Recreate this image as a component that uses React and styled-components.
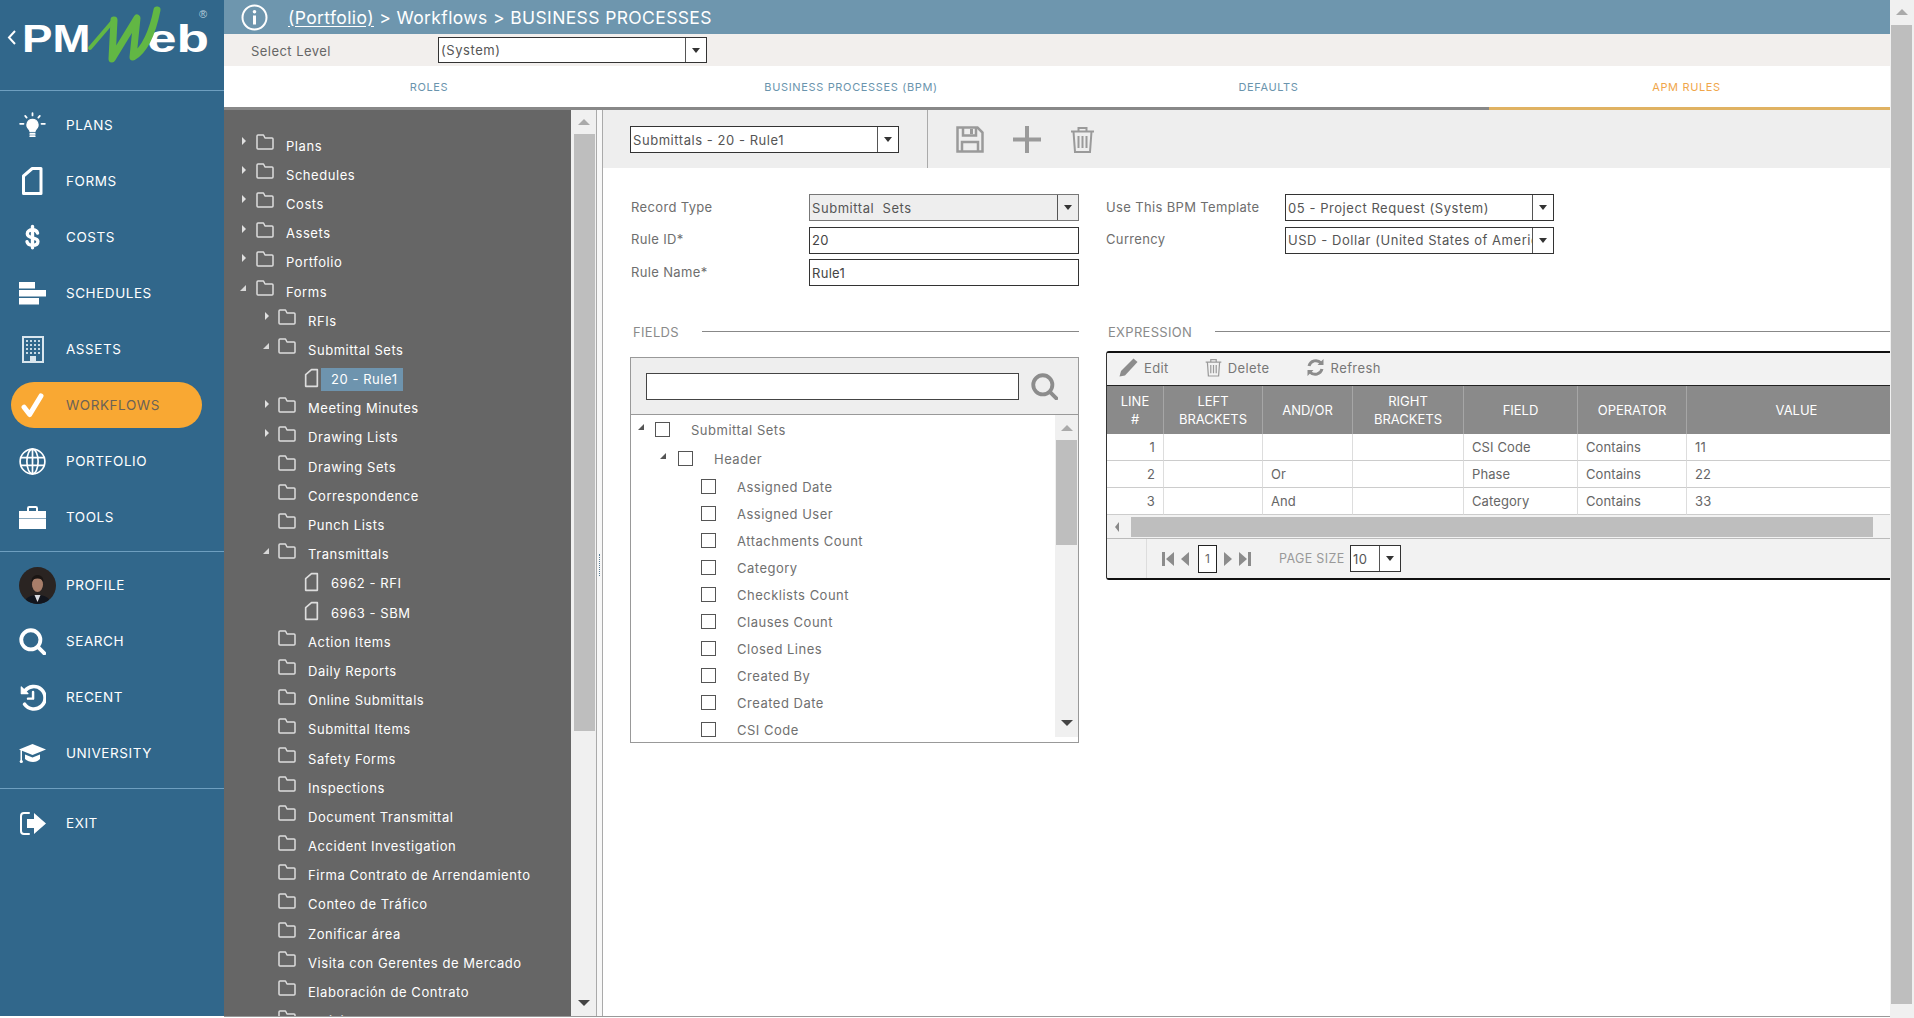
import React from 'react'
import styled, { createGlobalStyle } from 'styled-components'

const FONT = `Inter, "Open Sans", "Liberation Sans", sans-serif`

const Global = createGlobalStyle`
  html, body { margin: 0; padding: 0; height: 100%; overflow: hidden; background: #fff; }
  #root { height: 100%; }
  * { box-sizing: border-box; }
  body { font-family: ${FONT}; }
`

const Page = styled.div`
  width: 1914px;
  height: 1018px;
  display: flex;
  overflow: hidden;
`

// ---- sidebar ----
const Sidebar = styled.aside`
  width: 224px;
  flex: none;
  height: 1016px;
  background: #31678b;
  display: flex;
  flex-direction: column;
`

const LogoBox = styled.div`
  height: 91px;
  flex: none;
  border-bottom: 1px solid #6e9fc0;
  position: relative;
  display: flex;
  align-items: flex-start;
  padding: 17px 0 0 22px;
  color: #fff;
  font: 700 38px/44px "Liberation Sans", Arial, sans-serif;
`

const LogoPm = styled.span`
  width: 57px;
  flex: none;
  transform: scaleX(1.2);
  transform-origin: left;
`

const LogoEb = styled.span`
  margin-left: 68px;
  transform: scaleX(1.4);
  transform-origin: left;
`

const LogoMark = styled.svg`
  position: absolute;
  left: 0;
  top: 0;
`

const Trademark = styled.span`
  position: absolute;
  left: 199px;
  top: 9px;
  font: 400 11px/11px "Liberation Sans", Arial, sans-serif;
  color: #b9cfdd;
`

const Menu = styled.nav`
  display: flex;
  flex-direction: column;
  padding: ${p => p.$pad || '0'};
  border-bottom: ${p => (p.$line ? '1px solid #6e9fc0' : '0')};
`

const MenuItem = styled.a`
  height: ${p => (p.$active ? 46 : 56)}px;
  margin: ${p => (p.$active ? '5px' : '0')} 22px ${p => (p.$active ? '5px' : '0')} 11px;
  padding-left: 8px;
  display: flex;
  align-items: center;
  gap: 20px;
  color: ${p => (p.$active ? '#6b6256' : '#fff')};
  background: ${p => (p.$active ? '#f9a833' : 'transparent')};
  border-radius: 23px;
  font-size: 13.5px;
  letter-spacing: 0.55px;
`

const MenuIcon = styled.span`
  width: 27px;
  height: 30px;
  flex: none;
  display: flex;
  align-items: center;
  justify-content: center;
`

const AvatarSvg = styled.svg`
  flex: none;
  margin-left: 5px;
  margin-right: -5px;
`

// ---- main column ----
const Main = styled.div`
  flex: 1;
  min-width: 0;
  display: flex;
  flex-direction: column;
  height: 1017px;
  border-bottom: 1px solid #999;
`

const TopBar = styled.header`
  height: 34px;
  flex: none;
  background: #6e96ae;
  display: flex;
  align-items: center;
  gap: 20px;
  padding-left: 17px;
  color: #fff;
  font-size: 17.5px;
  letter-spacing: 0.38px;
`

const Crumb = styled.span`
  text-decoration: underline;
  text-underline-offset: 2px;
`

const LevelBar = styled.div`
  height: 32px;
  flex: none;
  background: #f2efed;
  display: flex;
  align-items: center;
  padding-left: 27px;
  font-size: 13px;
  color: #666;
`

const LevelLabel = styled.span`
  width: 187px;
  padding-top: 1px;
  letter-spacing: 0.45px;
`

const TabBar = styled.div`
  height: 44px;
  flex: none;
  display: flex;
  background: #fff;
  border-bottom: 3px solid #888;
`

const Tab = styled.div`
  width: ${p => p.$w}px;
  padding-right: ${p => p.$pr || 0}px;
  margin-bottom: -3px;
  border-bottom: 3px solid ${p => (p.$active ? '#e0b262' : '#888')};
  display: flex;
  align-items: center;
  justify-content: center;
  font-size: 11px;
  letter-spacing: 0.65px;
  color: ${p => (p.$active ? '#f0a64a' : '#6a94ad')};
`

const Body = styled.div`
  flex: 1;
  min-height: 0;
  display: flex;
`

// ---- tree panel ----
const TreePanel = styled.div`
  width: 347px;
  flex: none;
  background: #666;
  padding: 21px 0 0;
  overflow: hidden;
`

const TreeRow = styled.div`
  height: 29.2px;
  display: flex;
  align-items: center;
  position: relative;
  padding-left: ${p => 62 + p.$level * 22 + (p.$level === 2 ? 1 : 0)}px;
  color: #fff;
  font-size: 13px;
  letter-spacing: 0.55px;
  white-space: nowrap;
`

const TreeArrow = styled.span`
  position: absolute;
  left: ${p => 18 + p.$level * 23}px;
  top: 4px;
  width: 0;
  height: 0;
  ${p =>
    p.$open
      ? `border-left: 6px solid transparent; border-bottom: 6px solid #d8d8d8; margin-top: 4px; margin-left: -2px;`
      : `border-left: 4px solid #e0e0e0; border-top: 4px solid transparent; border-bottom: 4px solid transparent; margin-top: 2px;`}
`

const TreeGlyph = styled.span`
  position: absolute;
  left: ${p => p.$left}px;
  top: 3px;
`

const TreeText = styled.span`
  padding: ${p => (p.$selected ? '3px 5px 4px 10px' : '0')};
  margin-left: ${p => (p.$selected ? '-10px' : '0')};
  background: ${p => (p.$selected ? '#6e94ae' : 'transparent')};
`

const ScrollBar = styled.div`
  width: ${p => p.$w || 25}px;
  flex: none;
  background: #f0f0f0;
  display: flex;
  flex-direction: column;
  align-items: center;
  position: relative;
`

const ScrollThumb = styled.div`
  background: #bebebe;
  width: ${p => p.$w}px;
  position: absolute;
  top: ${p => p.$top}px;
  height: ${p => p.$h}px;
  right: ${p => p.$right || 1}px;
`

const Tri = styled.span`
  position: absolute;
  top: ${p => p.$top}px;
  left: 50%;
  margin-left: -6px;
  width: 0;
  height: 0;
  border-left: 6px solid transparent;
  border-right: 6px solid transparent;
  ${p => (p.$down ? 'border-top: 6px solid #444;' : 'border-bottom: 6px solid #aaa;')}
`

const Splitter = styled.div`
  width: 7px;
  flex: none;
  background: #f7f7f7;
  border-left: 1px solid #aaa;
  border-right: 1px solid #aaa;
  display: flex;
  align-items: center;
  justify-content: center;
`

const SplitDots = styled.span`
  width: 1px;
  height: 22px;
  margin-top: 3px;
  border-left: 1px dotted #5a7e96;
`

// ---- content ----
const Content = styled.section`
  flex: 1;
  min-width: 0;
  display: flex;
  flex-direction: column;
`

const ContentArea = styled.div`
  width: 1287px;
  display: flex;
  flex-direction: column;
`

const Toolbar = styled.div`
  height: 58px;
  flex: none;
  background: #eee;
  display: flex;
`

const ToolSelectCell = styled.div`
  width: 325px;
  padding: 16px 0 0 27px;
  border-right: 1px solid #aaa;
`

const ToolIcons = styled.div`
  display: flex;
  gap: 29px;
  padding: 16px 0 0 28px;
`

const SelectBox = styled.div`
  width: ${p => p.$w || 269}px;
  height: ${p => p.$h || 27}px;
  flex: none;
  display: flex;
  border: 1px solid ${p => (p.$grey ? '#777' : '#333')};
  background: ${p => (p.$grey ? '#eee' : '#fff')};
  font-size: 13px;
  letter-spacing: 0.55px;
  color: #555;
  padding-left: 2px;
  align-items: center;
  overflow: hidden;
`

const SelectText = styled.span`
  flex: 1;
  min-width: 0;
  white-space: nowrap;
  overflow: hidden;
`

const SelectButton = styled.span`
  width: ${p => p.$w || 21}px;
  height: 100%;
  flex: none;
  border-left: 1px solid #555;
  background: ${p => (p.$grey ? '#eee' : '#fff')};
  display: flex;
  align-items: center;
  justify-content: center;
  &::after {
    content: '';
    border-left: 4px solid transparent;
    border-right: 4px solid transparent;
    border-top: 5px solid #333;
  }
`

const TextBox = styled.div`
  width: 270px;
  height: 27px;
  border: 1px solid #333;
  background: #fff;
  font-size: 13px;
  letter-spacing: 0.3px;
  color: #444;
  display: flex;
  align-items: center;
  padding-left: 2px;
`

const FormArea = styled.div`
  display: flex;
  padding: 26px 0 0 28px;
  height: 153px;
  flex: none;
`

const FormColumn = styled.div`
  width: ${p => p.$w}px;
  flex: none;
  display: flex;
  flex-direction: column;
  gap: 5.5px;
`

const FormRow = styled.div`
  display: flex;
  align-items: center;
  height: 27px;
`

const FormLabel = styled.label`
  width: ${p => p.$w}px;
  flex: none;
  margin-top: -2px;
  font-size: 13px;
  letter-spacing: 0.35px;
  color: #6e6e6e;
`

const Panels = styled.div`
  display: flex;
  padding-left: 27px;
`

const FieldsColumn = styled.div`
  width: 449px;
  flex: none;
  margin-right: 27px;
`

const ExpressionColumn = styled.div`
  flex: 1;
  min-width: 0;
`

const SectionTitle = styled.div`
  display: flex;
  align-items: center;
  gap: 23px;
  height: 22px;
  margin-bottom: 14px;
  padding-left: ${p => p.$pl || 3}px;
  font-size: 13px;
  letter-spacing: 0.3px;
  color: #8a8a8a;
  &::after {
    content: '';
    flex: 1;
    height: 1px;
    background: #888;
    margin-top: -2px;
  }
`

const FieldsBox = styled.div`
  width: 449px;
  height: 386px;
  border: 1px solid #999;
  display: flex;
  flex-direction: column;
`

const FieldsSearch = styled.div`
  height: 57px;
  flex: none;
  background: #eee;
  border-bottom: 1px solid #999;
  display: flex;
  align-items: center;
  gap: 12px;
  padding-left: 15px;
`

const SearchInput = styled.div`
  width: 373px;
  height: 27px;
  border: 1px solid #444;
  background: #fff;
`

const FieldsBody = styled.div`
  flex: 1;
  min-height: 0;
  display: flex;
  padding-bottom: 5px;
`

const FieldsList = styled.div`
  flex: 1;
  min-width: 0;
  overflow: hidden;
`

const FieldRow = styled.div`
  height: ${p => (p.$top ? 29 : 27)}px;
  display: flex;
  align-items: center;
  position: relative;
  padding-left: ${p => p.$pad}px;
  font-size: 13px;
  letter-spacing: 0.5px;
  color: #707070;
  white-space: nowrap;
`

const FieldTri = styled.span`
  position: absolute;
  left: ${p => p.$left}px;
  top: 9px;
  border-left: 6px solid transparent;
  border-bottom: 6px solid #555;
  width: 0;
  height: 0;
`

const Check = styled.span`
  width: 15px;
  height: 15px;
  flex: none;
  border: 1px solid #555;
  background: #fff;
  margin-right: 21px;
`

const GridBox = styled.div`
  width: 784px;
  height: 229px;
  overflow: hidden;
  border-top: 2px solid #111;
  border-left: 1px solid #333;
  border-bottom: 2px solid #111;
  border-radius: 3px 0 0 3px;
  margin-top: -6px;
  display: flex;
  flex-direction: column;
`

const GridTools = styled.div`
  height: 33px;
  flex: none;
  background: #f2f2f2;
  border-bottom: 1px solid #222;
  display: flex;
  align-items: center;
  padding: 0 0 3px 12px;
  gap: 36px;
`

const GridTool = styled.span`
  display: flex;
  align-items: center;
  gap: 6px;
  font-size: 13px;
  letter-spacing: 0.4px;
  color: #777;
`

const GridTable = styled.div`
  display: grid;
  grid-template-columns: 57px 99px 90px 111px 114px 109px 220px;
`

const HeadCell = styled.div`
  height: 48px;
  background: #8a8a8a;
  border-right: 1px solid #a6a6a6;
  color: #fff;
  font-size: 13px;
  line-height: 18px;
  display: flex;
  align-items: center;
  justify-content: center;
  text-align: center;
  white-space: pre-line;
`

const Cell = styled.div`
  height: 27px;
  border-right: 1px solid #ddd;
  border-bottom: 1px solid #ccc;
  font-size: 13px;
  letter-spacing: 0.1px;
  color: #666;
  display: flex;
  align-items: center;
  padding: 0 8px;
  justify-content: ${p => (p.$right ? 'flex-end' : 'flex-start')};
`

const GridScroll = styled.div`
  height: 24px;
  flex: none;
  background: #f2f2f2;
  border-bottom: 1px solid #bbb;
  position: relative;
  display: flex;
  align-items: center;
  padding-left: 8px;
  &::before {
    content: '';
    border-top: 5px solid transparent;
    border-bottom: 5px solid transparent;
    border-right: 4px solid #888;
  }
`

const GridThumb = styled.div`
  position: absolute;
  left: 24px;
  top: 2px;
  width: 742px;
  height: 20px;
  background: #bebebe;
`

const Pager = styled.div`
  flex: 1;
  min-height: 0;
  background: #f2f2f2;
  display: flex;
  align-items: center;
`

const PagerSpacer = styled.div`
  width: 40px;
  height: 100%;
  flex: none;
  border-right: 1px solid #ddd;
  margin-right: 15px;
`

const PageNumber = styled.span`
  width: 19px;
  height: 28px;
  border: 1px solid #222;
  background: #fff;
  font-size: 12px;
  color: #666;
  display: flex;
  align-items: center;
  justify-content: center;
  margin: 0 6px 0 8px;
`

const PageSizeLabel = styled.span`
  margin: 0 3px 0 28px;
  width: 68px;
  flex: none;
  font-size: 12.5px;
  letter-spacing: 0.35px;
  white-space: nowrap;
  color: #999;
`

const ArrowSvg = styled.svg`
  flex: none;
  transform: ${p => (p.$flip ? 'scaleX(-1)' : 'none')};
`

// ---- page scrollbar ----
const PageScroll = styled.div`
  width: 24px;
  flex: none;
  height: 1018px;
  background: #f0f0f0;
  position: relative;
`

const PageThumb = styled.div`
  position: absolute;
  left: 1px;
  right: 2px;
  top: 25px;
  bottom: 14px;
  background: #bebebe;
`

// ---- icons ----
const Glyph = ({ children, size = 27, vb = 24, color = '#fff', sw = 2, fill = 'none' }) => (
  <svg width={size} height={size} viewBox={`0 0 ${vb} ${vb}`} fill={fill} stroke={color} strokeWidth={sw} strokeLinecap="round" strokeLinejoin="round">
    {children}
  </svg>
)

const BulbIcon = () => (
  <Glyph>
    <path d="M12 6.5a5 5 0 0 0-3.2 8.8c.7.6 1 1.3 1 2.2h4.4c0-.9.3-1.6 1-2.2A5 5 0 0 0 12 6.5Z" fill="#fff" strokeWidth="1" />
    <path d="M10 19.5h4M10 21.5h4M12 1v2M5.5 3.5l1.3 1.5M18.5 3.5 17.2 5M1 10.5h3M20 10.5h3" strokeWidth="1.6" />
  </Glyph>
)

const DocIcon = ({ size = 30, color = '#fff', sw = 2.4 }) => (
  <svg width={size * 0.75} height={size} viewBox="0 0 18 24" fill="none" stroke={color} strokeWidth={sw} strokeLinejoin="round">
    <path d="M2 8 9 2h7v20H2Z" />
  </svg>
)

const DollarIcon = () => (
  <Glyph size={30} sw={3}>
    <path d="M16.5 8.5C16 6.6 14.2 5.6 12 5.6c-2.600 0-4.600 1.300-4.600 3.400 0 5 9.400 2.400 9.400 7 0 2.200-2.100 3.400-4.800 3.400-2.500 0-4.400-1.100-4.900-3.200M12 2.500v19" />
  </Glyph>
)

const ScheduleIcon = () => (
  <svg width="27" height="23" viewBox="0 0 27 23" fill="#fff">
    <rect x="0" y="0" width="16" height="6.500" />
    <rect x="0" y="8" width="27" height="6.500" />
    <rect x="0" y="16" width="20" height="6.500" />
  </svg>
)

const BuildingIcon = () => (
  <svg width="22" height="27" viewBox="0 0 22 27">
    <rect x="0" y="0" width="22" height="27" fill="#d9e6ee" />
    <rect x="2" y="2" width="18" height="23" fill="#31678b" />
    <g fill="#c7d9e4">
      {[4, 8, 12, 16].map(y => [4, 8, 12, 16].map(x => <rect key={`${x}-${y}`} x={x} y={y} width="2" height="2" />))}
    </g>
    <rect x="8" y="20" width="6" height="5" fill="#d9e6ee" />
  </svg>
)

const CheckIcon = () => (
  <Glyph size={33} sw={4.500}>
    <path d="M4.500 13.500 9.500 20 19.500 3.500" />
  </Glyph>
)

const GlobeIcon = () => (
  <Glyph sw={1.5}>
    <circle cx="12" cy="12" r="11" />
    <ellipse cx="12" cy="12" rx="5" ry="11" />
    <path d="M12 1v22M1.500 8.500h21M1.500 15.500h21" />
  </Glyph>
)

const CaseIcon = () => (
  <svg width="27" height="23" viewBox="0 0 27 23">
    <path d="M9 5V2.200C9 1.500 9.500 1 10.200 1h6.600c.7 0 1.200.5 1.200 1.200V5" fill="none" stroke="#fff" strokeWidth="2" />
    <rect x="0" y="5" width="27" height="18" fill="#fff" />
    <rect x="0" y="12" width="27" height="1" fill="#8aa9bf" />
  </svg>
)

const SearchIcon = ({ color = '#fff', size = 27, sw = 3.400 }) => (
  <Glyph size={size} color={color} sw={sw}>
    <circle cx="10.500" cy="10.500" r="8.500" />
    <path d="m17 17 5.500 5.500" />
  </Glyph>
)

const RecentIcon = () => (
  <Glyph sw={3.200}>
    <path d="M5 6.500A10 10 0 1 1 5 18" />
    <path d="M12.500 7v6H8" strokeWidth="2.200" />
    <path d="M2 2.500v6h6Z" fill="#fff" strokeWidth="1" />
  </Glyph>
)

const CapIcon = () => (
  <svg width="27" height="22" viewBox="0 0 27 22" fill="#fff">
    <path d="M13.500 2 27 7.500 13.500 13 0 7.500Z" />
    <path d="M6 12.500v4.500c2 2 5 3 8 3s5-1 7-3v-4.500l-7.500 3Z" />
    <rect x="1.500" y="8" width="1.500" height="11" />
    <circle cx="2.300" cy="19.500" r="1.600" />
  </svg>
)

const ExitIcon = () => (
  <svg width="27" height="25" viewBox="0 0 27 25">
    <path d="M10 2H5a3 3 0 0 0-3 3v15a3 3 0 0 0 3 3h5" fill="none" stroke="#fff" strokeWidth="2" strokeLinecap="round" />
    <path d="M8 8h7V2l12 10.500L15 23v-6H8Z" fill="#fff" />
  </svg>
)

const Avatar = () => (
  <AvatarSvg width="37" height="37" viewBox="0 0 37 37">
    <defs>
      <clipPath id="avatar-clip"><circle cx="18.500" cy="18.500" r="18.500" /></clipPath>
    </defs>
    <g clipPath="url(#avatar-clip)">
      <rect width="37" height="37" fill="#2a2422" />
      <path d="M5 37c1-7 7-9 13.500-9S31 30 32 37Z" fill="#12151d" />
      <path d="M15.500 28h6l-3 7Z" fill="#d9dbe0" />
      <ellipse cx="18.500" cy="17.500" rx="5.500" ry="7.500" fill="#a87e6a" />
      <path d="M12.500 15c0-5 2.500-7 6-7s6 2 6 7c-1.500-2.500-3-3.500-6-3.500s-4.500 1-6 3.500Z" fill="#1a1513" />
    </g>
  </AvatarSvg>
)

const InfoIcon = () => (
  <svg width="27" height="27" viewBox="0 0 27 27" fill="none">
    <circle cx="13.500" cy="13.500" r="12" stroke="#fff" strokeWidth="2" />
    <rect x="12" y="11.500" width="3" height="9" fill="#fff" />
    <circle cx="13.500" cy="7.800" r="1.800" fill="#fff" />
  </svg>
)

const FolderIcon = () => (
  <svg width="18" height="16" viewBox="0 0 18 16" fill="none" stroke="#ddd" strokeWidth="1.500" strokeLinejoin="round">
    <path d="M1 3V14a1 1 0 0 0 1 1h14a1 1 0 0 0 1-1V5a1 1 0 0 0-1-1H9L7.500 1H2a1 1 0 0 0-1 1Z" />
  </svg>
)

const SaveIcon = () => (
  <svg width="28" height="27" viewBox="0 0 28 27" fill="none" stroke="#9a9a9a" strokeWidth="2.500">
    <path d="M1.500 1.500h20l5 5v19h-25Z" />
    <path d="M7 1.500v8h13v-8M6 25.500V16h16v9.500" />
    <rect x="14" y="3" width="3" height="5" fill="#9a9a9a" stroke="none" />
  </svg>
)

const PlusIcon = () => (
  <svg width="28" height="27" viewBox="0 0 28 27" fill="#9a9a9a">
    <rect x="12" y="0" width="4" height="27" />
    <rect x="0" y="11.500" width="28" height="4" />
  </svg>
)

const TrashIcon = ({ w = 25, h = 27, sw = 2 }) => (
  <svg width={w} height={h} viewBox="0 0 25 27" fill="none" stroke="#9a9a9a" strokeWidth={sw}>
    <path d="M1 5.500h23M8.500 5V2h8v3M3.500 5.500 5 26h15l1.500-20.500M8.500 10v12M12.500 10v12M16.500 10v12" />
  </svg>
)

const PencilIcon = () => (
  <svg width="19" height="19" viewBox="0 0 19 19" fill="#8c8c8c">
    <path d="M14.500 0.500 18.500 4 6 17.500 0.500 18.500 2 13Z" />
  </svg>
)

const RefreshIcon = () => (
  <svg width="19" height="19" viewBox="0 0 19 19" fill="none" stroke="#8c8c8c" strokeWidth="3">
    <path d="M3 8a7 7 0 0 1 12-3M16 11a7 7 0 0 1-12 3" />
    <path d="M17.500 1v6h-6ZM1.500 18v-6h6Z" fill="#8c8c8c" stroke="none" />
  </svg>
)

const PagerArrows = ({ flip }) => (
  <ArrowSvg $flip={flip} width="28" height="20" viewBox="0 0 28 20" fill="#8c8c8c">
    <rect x="0" y="3" width="3" height="14" />
    <path d="M12 3v14L4 10ZM27 3v14l-8-7Z" />
  </ArrowSvg>
)

const menuTop = [
  ['PLANS', <BulbIcon />],
  ['FORMS', <DocIcon />],
  ['COSTS', <DollarIcon />],
  ['SCHEDULES', <ScheduleIcon />],
  ['ASSETS', <BuildingIcon />],
  ['WORKFLOWS', <CheckIcon />, true],
  ['PORTFOLIO', <GlobeIcon />],
  ['TOOLS', <CaseIcon />],
]

const menuMid = [
  ['PROFILE', <Avatar />],
  ['SEARCH', <SearchIcon />],
  ['RECENT', <RecentIcon />],
  ['UNIVERSITY', <CapIcon />],
]

// [label, level, arrow state, kind]
const tree = [
  ['Plans', 0, 'closed'],
  ['Schedules', 0, 'closed'],
  ['Costs', 0, 'closed'],
  ['Assets', 0, 'closed'],
  ['Portfolio', 0, 'closed'],
  ['Forms', 0, 'open'],
  ['RFIs', 1, 'closed'],
  ['Submittal Sets', 1, 'open'],
  ['20 - Rule1', 2, null, 'selected'],
  ['Meeting Minutes', 1, 'closed'],
  ['Drawing Lists', 1, 'closed'],
  ['Drawing Sets', 1],
  ['Correspondence', 1],
  ['Punch Lists', 1],
  ['Transmittals', 1, 'open'],
  ['6962 - RFI', 2, null, 'doc'],
  ['6963 - SBM', 2, null, 'doc'],
  ['Action Items', 1],
  ['Daily Reports', 1],
  ['Online Submittals', 1],
  ['Submittal Items', 1],
  ['Safety Forms', 1],
  ['Inspections', 1],
  ['Document Transmittal', 1],
  ['Accident Investigation', 1],
  ['Firma Contrato de Arrendamiento', 1],
  ['Conteo de Tráfico', 1],
  ['Zonificar área', 1],
  ['Visita con Gerentes de Mercado', 1],
  ['Elaboración de Contrato', 1],
  ['Solicitud de Presupuesto', 1],
]

const fields = ['Assigned Date', 'Assigned User', 'Attachments Count', 'Category', 'Checklists Count', 'Clauses Count', 'Closed Lines', 'Created By', 'Created Date', 'CSI Code']

const headers = ['LINE\n#', 'LEFT\nBRACKETS', 'AND/OR', 'RIGHT\nBRACKETS', 'FIELD', 'OPERATOR', 'VALUE']

const rows = [
  ['1', '', '', '', 'CSI Code', 'Contains', '11'],
  ['2', '', 'Or', '', 'Phase', 'Contains', '22'],
  ['3', '', 'And', '', 'Category', 'Contains', '33'],
]

function Logo() {
  return (
    <LogoBox>
      <LogoPm>PM</LogoPm>
      <LogoEb>eb</LogoEb>
      <LogoMark width="224" height="70" viewBox="0 0 224 70" fill="none">
        <path d="M15 31 9 37.500l6 6.500" stroke="#fff" strokeWidth="2" />
        <path d="M90 48 L114 20" stroke="#62b744" strokeWidth="4" strokeLinecap="round" />
        <path d="M114 20 L112 59 L137 18 L133 57 C 145 50 153 30 157 10" stroke="#62b744" strokeWidth="7" strokeLinecap="round" strokeLinejoin="round" />
      </LogoMark>
      <Trademark>®</Trademark>
    </LogoBox>
  )
}

function App() {
  return (
    <Page>
      <Global />
      <Sidebar>
        <Logo />
        <Menu $line $pad="6px 0 6px">
          {menuTop.map(([label, icon, active]) => (
            <MenuItem key={label} $active={active}>
              <MenuIcon>{icon}</MenuIcon>
              {label}
            </MenuItem>
          ))}
        </Menu>
        <Menu $line $pad="5px 0 7px">
          {menuMid.map(([label, icon]) => (
            <MenuItem key={label}>
              <MenuIcon>{icon}</MenuIcon>
              {label}
            </MenuItem>
          ))}
        </Menu>
        <Menu $pad="6px 0">
          <MenuItem>
            <MenuIcon><ExitIcon /></MenuIcon>
            EXIT
          </MenuItem>
        </Menu>
      </Sidebar>

      <Main>
        <TopBar>
          <InfoIcon />
          <span><Crumb>(Portfolio)</Crumb> &gt; Workflows &gt; BUSINESS PROCESSES</span>
        </TopBar>
        <LevelBar>
          <LevelLabel>Select Level</LevelLabel>
          <SelectBox $h={26}>
            <SelectText>(System)</SelectText>
            <SelectButton />
          </SelectBox>
        </LevelBar>
        <TabBar>
          <Tab $w={410}>ROLES</Tab>
          <Tab $w={434}>BUSINESS PROCESSES (BPM)</Tab>
          <Tab $w={421} $pr={20}>DEFAULTS</Tab>
          <Tab $w={401} $pr={6} $active>APM RULES</Tab>
        </TabBar>
        <Body>
          <TreePanel>
            {tree.map(([label, level, arrow, kind]) => (
              <TreeRow key={label} $level={level}>
                {arrow && <TreeArrow $level={level} $open={arrow === 'open'} />}
                {kind ? (
                  <TreeGlyph $left={80}><DocIcon size={20} color="#ddd" sw={2} /></TreeGlyph>
                ) : (
                  <TreeGlyph $left={32 + level * 22}><FolderIcon /></TreeGlyph>
                )}
                <TreeText $selected={kind === 'selected'}>{label}</TreeText>
              </TreeRow>
            ))}
          </TreePanel>
          <ScrollBar>
            <Tri $top={9} />
            <ScrollThumb $w={21} $top={24} $h={597} />
            <Tri $top={890} $down />
          </ScrollBar>
          <Splitter><SplitDots /></Splitter>
          <Content>
            <ContentArea>
              <Toolbar>
                <ToolSelectCell>
                  <SelectBox>
                    <SelectText>Submittals - 20 - Rule1</SelectText>
                    <SelectButton />
                  </SelectBox>
                </ToolSelectCell>
                <ToolIcons>
                  <SaveIcon />
                  <PlusIcon />
                  <TrashIcon />
                </ToolIcons>
              </Toolbar>
              <FormArea>
                <FormColumn $w={475}>
                  <FormRow>
                    <FormLabel $w={178}>Record Type</FormLabel>
                    <SelectBox $grey $w={270}>
                      <SelectText>Submittal&nbsp; Sets</SelectText>
                      <SelectButton $grey />
                    </SelectBox>
                  </FormRow>
                  <FormRow>
                    <FormLabel $w={178}>Rule ID*</FormLabel>
                    <TextBox>20</TextBox>
                  </FormRow>
                  <FormRow>
                    <FormLabel $w={178}>Rule Name*</FormLabel>
                    <TextBox>Rule1</TextBox>
                  </FormRow>
                </FormColumn>
                <FormColumn $w={450}>
                  <FormRow>
                    <FormLabel $w={179}>Use This BPM Template</FormLabel>
                    <SelectBox>
                      <SelectText>05 - Project Request (System)</SelectText>
                      <SelectButton />
                    </SelectBox>
                  </FormRow>
                  <FormRow>
                    <FormLabel $w={179}>Currency</FormLabel>
                    <SelectBox>
                      <SelectText>USD - Dollar (United States of America)</SelectText>
                      <SelectButton />
                    </SelectBox>
                  </FormRow>
                </FormColumn>
              </FormArea>
              <Panels>
                <FieldsColumn>
                  <SectionTitle>FIELDS</SectionTitle>
                  <FieldsBox>
                    <FieldsSearch>
                      <SearchInput />
                      <SearchIcon color="#8c8c8c" />
                    </FieldsSearch>
                    <FieldsBody>
                      <FieldsList>
                        <FieldRow $top $pad={24}>
                          <FieldTri $left={7} />
                          <Check />Submittal Sets
                        </FieldRow>
                        <FieldRow $top $pad={47}>
                          <FieldTri $left={29} />
                          <Check />Header
                        </FieldRow>
                        {fields.map(f => (
                          <FieldRow key={f} $pad={70}><Check />{f}</FieldRow>
                        ))}
                      </FieldsList>
                      <ScrollBar $w={23}>
                        <Tri $top={10} />
                        <ScrollThumb $w={21} $top={25} $h={105} />
                        <Tri $top={305} $down />
                      </ScrollBar>
                    </FieldsBody>
                  </FieldsBox>
                </FieldsColumn>
                <ExpressionColumn>
                  <SectionTitle $pl={2}>EXPRESSION</SectionTitle>
                  <GridBox>
                    <GridTools>
                      <GridTool><PencilIcon />Edit</GridTool>
                      <GridTool><TrashIcon w={17} h={19} sw={1.800} />Delete</GridTool>
                      <GridTool><RefreshIcon />Refresh</GridTool>
                    </GridTools>
                    <GridTable>
                      {headers.map(h => <HeadCell key={h}>{h}</HeadCell>)}
                      {rows.map(r =>
                        r.map((c, i) => (
                          <Cell key={`${r[0]}-${i}`} $right={i === 0}>{c}</Cell>
                        ))
                      )}
                    </GridTable>
                    <GridScroll><GridThumb /></GridScroll>
                    <Pager>
                      <PagerSpacer />
                      <PagerArrows />
                      <PageNumber>1</PageNumber>
                      <PagerArrows flip />
                      <PageSizeLabel>PAGE SIZE</PageSizeLabel>
                      <SelectBox $w={51} $h={27}>
                        <SelectText>10</SelectText>
                        <SelectButton />
                      </SelectBox>
                    </Pager>
                  </GridBox>
                </ExpressionColumn>
              </Panels>
            </ContentArea>
          </Content>
        </Body>
      </Main>
      <PageScroll>
        <Tri $top={9} />
        <PageThumb />
      </PageScroll>
    </Page>
  )
}

export default App
